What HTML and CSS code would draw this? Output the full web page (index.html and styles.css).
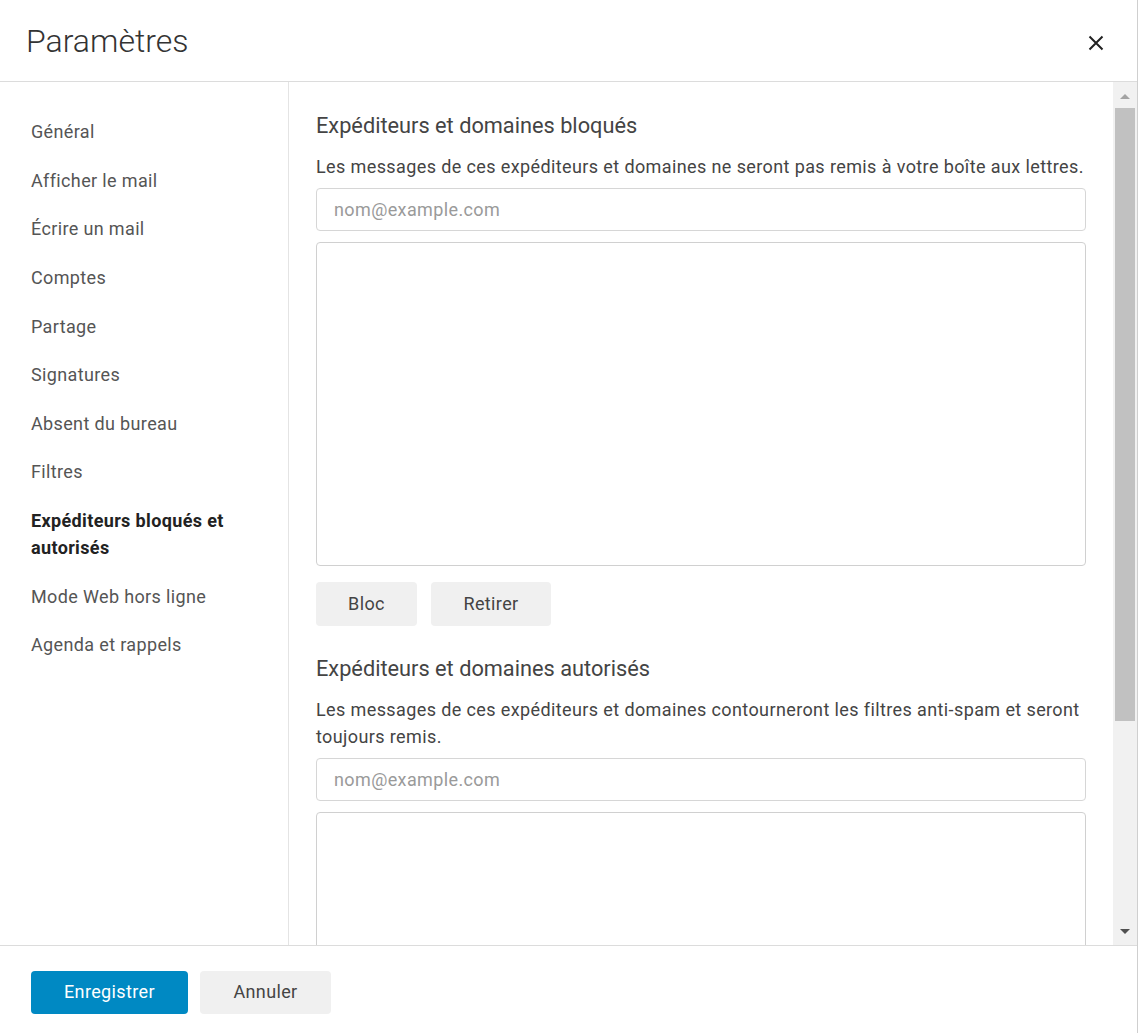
FILE: index.html
```html
<!DOCTYPE html>
<html lang="fr">
<head>
<meta charset="utf-8">
<title>Paramètres</title>
<link rel="stylesheet" href="styles.css">
</head>
<body>
<div class="modal">
  <header class="header">
    <h1 class="title">Paramètres</h1>
    <button class="close" aria-label="Fermer">
      <svg width="16" height="16" viewBox="0 0 16 16"><path d="M1.5 1.5 L14.5 14.5 M14.5 1.5 L1.5 14.5" stroke="#222" stroke-width="2" fill="none"/></svg>
    </button>
  </header>
  <div class="main">
    <nav class="sidebar">
      <a class="nav-item">Général</a>
      <a class="nav-item">Afficher le mail</a>
      <a class="nav-item">Écrire un mail</a>
      <a class="nav-item">Comptes</a>
      <a class="nav-item">Partage</a>
      <a class="nav-item">Signatures</a>
      <a class="nav-item">Absent du bureau</a>
      <a class="nav-item">Filtres</a>
      <a class="nav-item active">Expéditeurs bloqués et autorisés</a>
      <a class="nav-item">Mode Web hors ligne</a>
      <a class="nav-item">Agenda et rappels</a>
    </nav>
    <section class="content">
      <h2 class="section-title">Expéditeurs et domaines bloqués</h2>
      <p class="desc">Les messages de ces expéditeurs et domaines ne seront pas remis à votre boîte aux lettres.</p>
      <input class="field" type="text" placeholder="nom@example.com">
      <div class="list"></div>
      <div class="actions">
        <button class="btn btn-bloc">Bloc</button>
        <button class="btn btn-retirer">Retirer</button>
      </div>
      <h2 class="section-title second">Expéditeurs et domaines autorisés</h2>
      <p class="desc">Les messages de ces expéditeurs et domaines contourneront les filtres anti-spam et seront toujours remis.</p>
      <input class="field" type="text" placeholder="nom@example.com">
      <div class="list"></div>
    </section>
    <div class="scrollbar">
      <div class="sb-btn"><span class="arrow-up"></span></div>
      <div class="sb-track"><div class="sb-thumb"></div></div>
      <div class="sb-btn"><span class="arrow-down"></span></div>
    </div>
  </div>
  <footer class="footer">
    <button class="btn btn-primary">Enregistrer</button>
    <button class="btn btn-cancel">Annuler</button>
  </footer>
</div>
</body>
</html>
```

FILE: styles.css
```css
* { box-sizing: border-box; }
html, body { margin: 0; padding: 0; background: #fff; }
body { font-family: Roboto, "Liberation Sans", sans-serif; color: #444; }

.modal {
  width: 1138px;
  height: 1033px;
  display: flex;
  flex-direction: column;
  border-right: 1px solid #cfcfcf;
  background: #fff;
}

.header {
  height: 82px;
  flex: none;
  border-bottom: 1px solid #dcdcdc;
  display: flex;
  align-items: center;
  justify-content: space-between;
  padding: 0 33px 0 26px;
}
.title {
  margin: 0;
  font-size: 32px;
  line-height: 38px;
  font-weight: 300;
  color: #333;
}
.close {
  border: 0;
  background: transparent;
  padding: 0;
  width: 16px;
  height: 16px;
  margin-top: 5px;
  display: flex;
}

.main {
  flex: 1;
  min-height: 0;
  display: flex;
}

.sidebar {
  width: 289px;
  flex: none;
  border-right: 1px solid #e4e4e4;
  padding: 25.4px 20px 0 31px;
  display: flex;
  flex-direction: column;
}
.nav-item {
  display: block;
  font-size: 18px;
  line-height: 27px;
  letter-spacing: 0.36px;
  padding: 10.8px 0;
  color: #555;
}
.nav-item.active {
  font-weight: 700;
  color: #222;
}

.content {
  flex: 1;
  min-width: 0;
  overflow: hidden;
  padding: 28.5px 27px 0 27px;
  display: flex;
  flex-direction: column;
}
.section-title {
  margin: 0;
  font-size: 21.75px;
  line-height: 30px;
  font-weight: 400;
  color: #444;
}
.section-title.second { margin-top: 27.5px; }
.desc {
  margin: 12px 0 0;
  font-size: 18px;
  line-height: 27px;
  letter-spacing: 0.39px;
  color: #444;
}
.field {
  margin-top: 8px;
  height: 43px;
  width: 100%;
  flex: none;
  border: 1px solid #d6d6d6;
  border-radius: 4px;
  padding: 0 17px;
  font-family: inherit;
  font-size: 18px;
  letter-spacing: 0.38px;
  color: #444;
  outline: none;
}
.field::placeholder { color: #9a9a9a; }
.list {
  margin-top: 11.5px;
  height: 324px;
  flex: none;
  border: 1px solid #d0d0d0;
  border-radius: 4px;
}

.actions {
  margin-top: 16px;
  display: flex;
  gap: 14px;
}
.btn {
  border: 0;
  border-radius: 4px;
  font-family: inherit;
  font-size: 18px;
  letter-spacing: 0.38px;
  padding: 0;
  cursor: pointer;
}
.btn-bloc, .btn-retirer {
  height: 44px;
  background: #f0f0f0;
  color: #444;
  padding-bottom: 2px;
}
.btn-bloc { width: 101px; }
.btn-retirer { width: 120px; }

.scrollbar {
  width: 24px;
  flex: none;
  background: #f1f1f1;
  display: flex;
  flex-direction: column;
}
.sb-btn {
  height: 24px;
  flex: none;
  display: flex;
  align-items: center;
  justify-content: center;
}
.arrow-up {
  width: 0; height: 0;
  border-left: 5px solid transparent;
  border-right: 5px solid transparent;
  border-bottom: 5px solid #a3a3a3;
  margin-top: 4px;
}
.arrow-down {
  width: 0; height: 0;
  border-left: 5px solid transparent;
  border-right: 5px solid transparent;
  border-top: 5px solid #505050;
  margin-top: -4px;
}
.sb-track {
  flex: 1;
  padding: 2px 2px 0 2px;
}
.sb-thumb {
  height: 613px;
  background: #c1c1c1;
}

.footer {
  height: 88px;
  flex: none;
  border-top: 1px solid #dcdcdc;
  padding: 25px 0 0 31px;
  display: flex;
  align-items: flex-start;
  gap: 12px;
}
.btn-primary {
  width: 157px;
  height: 43px;
  background: #0089c3;
  color: #fff;
  padding-bottom: 2px;
}
.btn-cancel {
  width: 131px;
  height: 43px;
  background: #f0f0f0;
  color: #444;
  padding-bottom: 2px;
}
```
